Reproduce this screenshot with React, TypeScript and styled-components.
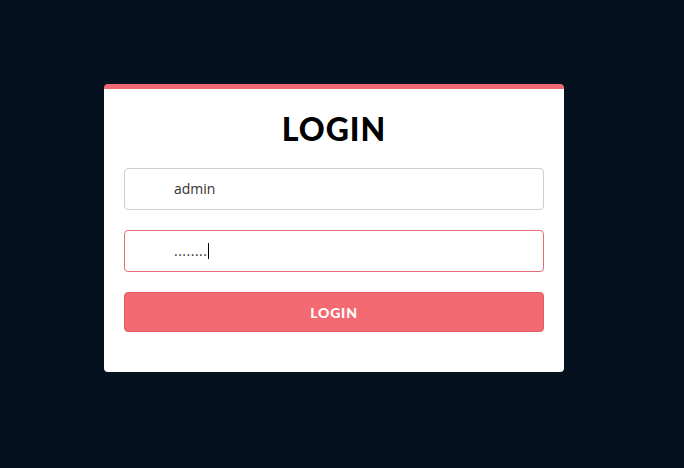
import React from "react";
import styled, { createGlobalStyle } from "styled-components";

const Global = createGlobalStyle`
  html, body { margin: 0; padding: 0; background: #06111f; }
  body { font-family: "Lato", "Open Sans", sans-serif; }
  * { box-sizing: border-box; }
`;

const Page = styled.div`
  width: 684px;
  height: 468px;
  display: flex;
  justify-content: center;
  padding: 84px 16px 0 0;
  background: #06111f;
`;

const Card = styled.form`
  width: 460px;
  height: 288px;
  background: #ffffff;
  border-top: 5px solid #f06a73;
  border-radius: 4px;
  padding: 20px 20px 40px;
  display: flex;
  flex-direction: column;
  align-items: stretch;
`;

const Title = styled.h1`
  margin: 0 0 20px;
  text-align: center;
  font-family: "Lato", sans-serif;
  font-weight: 900;
  font-size: 32px;
  line-height: 39px;
  letter-spacing: 1px;
  color: #000;
`;

const FieldWrap = styled.div`
  position: relative;
  margin-bottom: 20px;
`;

const Field = styled.input<{ $focused?: boolean; $secret?: boolean }>`
  display: block;
  height: 42px;
  width: 100%;
  border: 1px solid ${(p) => (p.$focused ? "#e26b72" : "#cfcfcf")};
  border-radius: 4px;
  padding: 0 12px 2px 49px;
  font-family: "Open Sans", sans-serif;
  font-size: 14px;
  letter-spacing: ${(p) => (p.$secret ? "0.5px" : "normal")};
  color: #333;
  outline: none;
  caret-color: ${(p) => (p.$focused ? "transparent" : "#000")};
`;

const Caret = styled.span`
  position: absolute;
  left: 84px;
  top: 13px;
  width: 1px;
  height: 16px;
  background: #000;
  pointer-events: none;
`;

const Button = styled.button`
  height: 40px;
  width: 100%;
  border: 1px solid #e35d66;
  border-radius: 4px;
  background: #f46a72;
  color: #fff;
  font-family: "Lato", sans-serif;
  font-weight: 900;
  font-size: 14px;
  letter-spacing: 0.8px;
  cursor: pointer;
`;

export default function App() {
  return (
    <>
      <Global />
      <Page>
        <Card onSubmit={(e) => e.preventDefault()}>
          <Title>LOGIN</Title>
          <FieldWrap>
            <Field type="text" defaultValue="admin" aria-label="username" />
          </FieldWrap>
          <FieldWrap>
            <Field
              type="text"
              defaultValue="........"
              $focused
              $secret
              autoFocus
              aria-label="password"
            />
            <Caret />
          </FieldWrap>
          <Button type="submit">LOGIN</Button>
        </Card>
      </Page>
    </>
  );
}
